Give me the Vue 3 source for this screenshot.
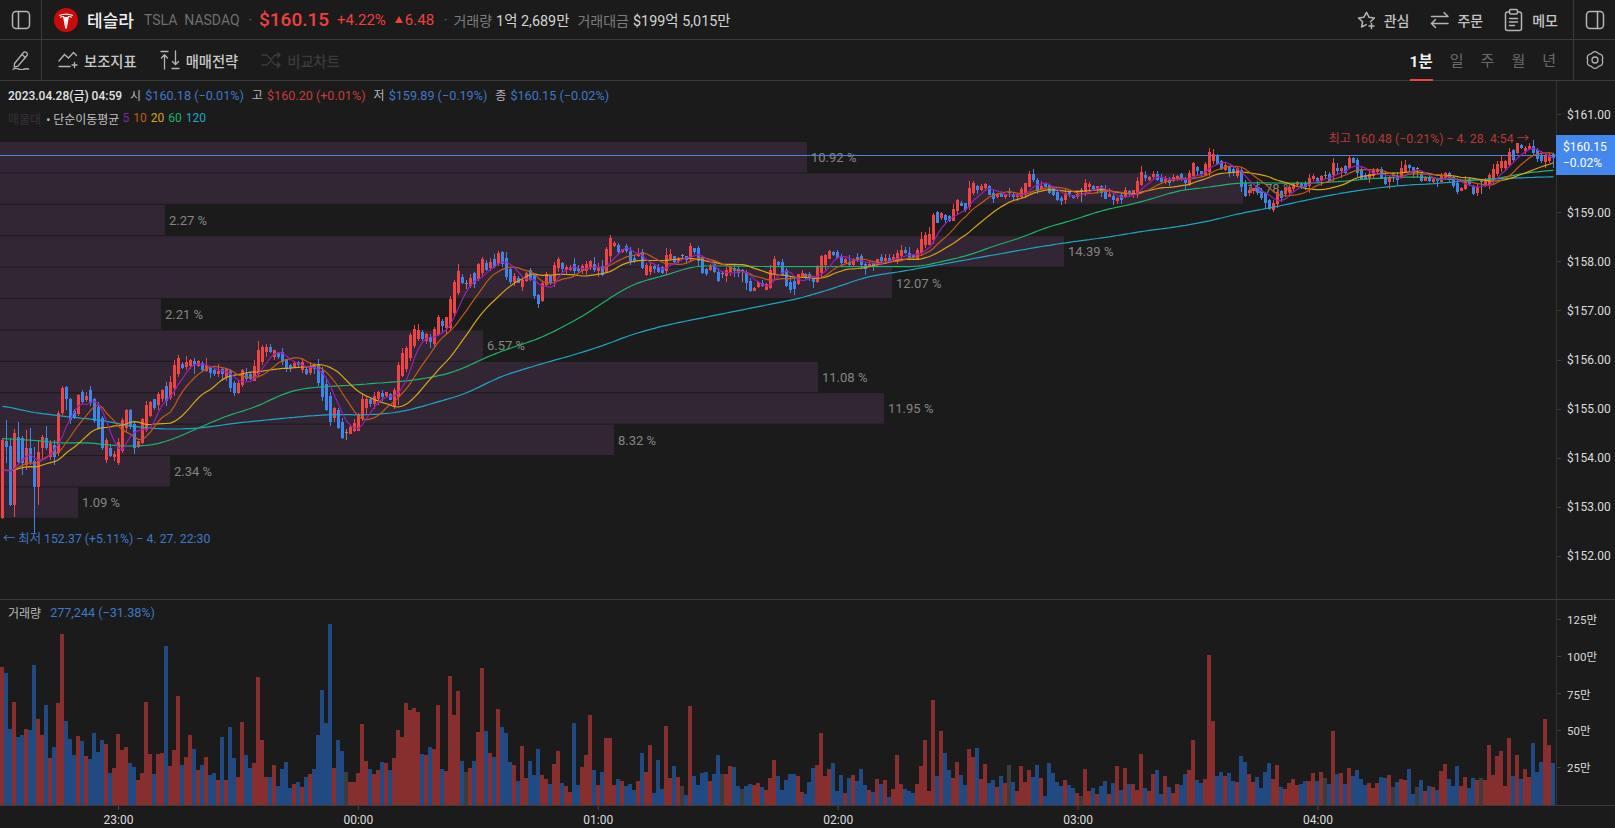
<template>
  <div class="page">
    <!-- Symbol bar -->
    <header class="bar top-bar">
      <div class="side-btn side-left">
        <svg width="20" height="20" viewBox="0 0 20 20" class="ico"><rect x="1.5" y="1.5" width="17" height="17" rx="3.5" /><path d="M7.5 1.5v17" /></svg>
      </div>
      <div class="logo">
        <svg width="24" height="24" viewBox="0 0 24 24">
          <circle cx="12" cy="12" r="12" fill="#c90b0b" />
          <path fill="#fff" d="M5 7Q12 4 19 7L18.6 8Q12 5.4 5.4 8Z" />
          <path fill="#fff" d="M6 8.7Q7.7 7.900 9.800 7.900L10.900 9.300 12 20.500 13.100 9.300 14.200 7.900Q16.300 7.900 18 8.700L17.300 10Q16.600 9 14.900 9L12.900 20 12 21 11.100 20 9.100 9Q7.400 9 6.700 10Z" />
          <path fill="#fff" d="M10.800 9h2.400L12.400 19.500h-.8Z" />
        </svg>
      </div>
      <strong class="name">테슬라</strong>
      <span class="ticker">TSLA</span>
      <span class="ticker exch">NASDAQ</span>
      <span class="dot">·</span>
      <span class="last">$160.15</span>
      <span class="chg">+4.22%</span>
      <span class="chg chg-abs"><i class="tri"></i>6.48</span>
      <span class="dot dot2">·</span>
      <span class="stat-label">거래량</span>
      <span class="stat-val">1억 2,689만</span>
      <span class="stat-label stat-gap">거래대금</span>
      <span class="stat-val">$199억 5,015만</span>
      <div class="spacer"></div>
      <button class="act">
        <svg width="20" height="20" viewBox="0 0 20 20" class="ico"><path d="M9.200 14.600 4.600 17l1-5.300L1.500 8l5.400-.8L9.500 2.300 12 7.200l5.400.8-3.900 3.700" stroke-linejoin="round" /><path d="M14.500 13.500v5M12 16h5" /></svg>
        <span>관심</span>
      </button>
      <button class="act">
        <svg width="20" height="18" viewBox="0 0 20 18" class="ico"><path d="M1.500 5.500h16.500M14 1.500l4 4M18 12.500H1.500M5.500 8.500l-4 4 4 4" /></svg>
        <span>주문</span>
      </button>
      <button class="act act-last">
        <svg width="19" height="24" viewBox="0 0 19 24" class="ico"><path d="M5.500 4H3.600Q1.500 4 1.500 6v14.500q0 2 2.100 2h11.800q2.100 0 2.100-2V6q0-2-2.100-2h-1.900" /><rect x="5.500" y="1.500" width="8" height="4.500" rx="1.200" /><path d="M5.500 10.500h8M5.500 14h8M5.500 17.500h5" /></svg>
        <span>메모</span>
      </button>
      <div class="side-btn side-right">
        <svg width="20" height="20" viewBox="0 0 20 20" class="ico"><rect x="1.500" y="1.500" width="17" height="17" rx="3.500" /><path d="M12.500 1.500v17" /></svg>
      </div>
    </header>

    <!-- Tool bar -->
    <nav class="bar tool-bar">
      <div class="side-btn side-left">
        <svg width="20" height="20" viewBox="0 0 20 20" class="ico thin"><path d="M3.500 13.500 12.500 2.500q1.200-1.200 2.600-.2l.9.8q1 1.100 0 2.400L7 16.200l-3.800 1z" stroke-linejoin="round" /><path d="M11 4.500l3.400 3" /><path d="M2 19.300q2.700-1.600 5.200-.4t5 .5q2.500-1 5.300-.4" /></svg>
      </div>
      <button class="tool tool-first">
        <svg width="20" height="18" viewBox="0 0 20 18" class="ico thin"><path d="M1 10 6.500 3.500 10.500 7 15.500 1.500l3 3" /><path d="M1 15.500h11" /><path d="M16.500 11.500v5M14 14h5" /></svg>
        <span>보조지표</span>
      </button>
      <button class="tool tool-mid">
        <svg width="20" height="20" viewBox="0 0 20 20" class="ico thin"><path d="M1 1.500h7M4.500 19V5M1.500 8l3-3.200 3 3.200" /><path d="M12 18.500h7M15.500 1v13.500M12.500 11.500l3 3 3-3" /></svg>
        <span>매매전략</span>
      </button>
      <button class="tool tool-mid tool-off">
        <svg width="20" height="16" viewBox="0 0 20 16" class="ico thin"><path d="M1 3h3.500q2 0 3.200 1.800l4.600 6.400Q13.500 13 15.500 13H19M1 13h3.500q2 0 3.200-1.800l4.600-6.400Q13.500 3 15.500 3H19M16.500 .5 19 3l-2.500 2.500M16.500 10.500 19 13l-2.500 2.500" /></svg>
        <span>비교차트</span>
      </button>
      <div class="spacer"></div>
      <div class="period-tabs">
        <span v-for="p in periods" :key="p" class="period" :class="{ active: p === '1분' }">{{ p }}</span>
      </div>
      <div class="side-btn side-right">
        <svg width="20" height="20" viewBox="0 0 20 20" class="ico thin"><path d="M6.350 3.680Q10 -.5 13.650 3.680 19.100 4.750 17.300 10 19.100 15.250 13.650 16.320 10 20.500 6.350 16.320 .9 15.250 2.700 10 .9 4.750 6.350 3.680Z" stroke-linejoin="round" /><circle cx="10" cy="10" r="3" /></svg>
      </div>
    </nav>

    <!-- Price pane -->
    <section class="pane price-pane">
      <div class="plot">
        <svg class="plot-svg" width="1556" height="518" viewBox="0 81 1556 518">
          <g v-for="(b, i) in bands" :key="'band' + i">
            <rect x="0" :y="bandTop(i)" :width="b.w" height="30.400" fill="#322635" />
            <text :x="b.w + 4" :y="bandTop(i) + 20" class="band-text">{{ b.label }}</text>
          </g>
          <rect x="0" y="155" width="1556" height="1" fill="#4a84dc" />
          <g shape-rendering="crispEdges">
            <g v-for="c in candles" :key="c.i">
              <rect :x="c.x + 1" :y="c.wt" width="1" :height="c.wb - c.wt" :fill="c.color" />
              <rect :x="c.x" :y="c.top" width="3" :height="c.flat ? 1 : c.h" :fill="c.color" />
            </g>
          </g>
          <polyline v-for="m in maLines" :key="m.color" :points="m.points" :stroke="m.color" fill="none" stroke-width="1.200" />
          <text x="1529" y="143" text-anchor="end" class="mark-text mark-high">최고 160.48 (−0.21%) − 4. 28. 4:54 →</text>
          <text x="3" y="543" class="mark-text mark-low">← 최저 152.37 (+5.11%) − 4. 27. 22:30</text>
        </svg>
        <div class="legend">
          <div class="legend-row">
            <b class="date">2023.04.28(금) 04:59</b>
            <span v-for="q in ohlc" :key="q.k" class="ohlc">
              <em>{{ q.k }}</em> <span :class="q.up ? 'red' : 'blue'">{{ q.v }}</span>
            </span>
          </div>
          <div class="legend-row row2">
            <span class="off">매물대</span>
            <span class="sma">• 단순이동평균</span>
            <span v-for="s in smaLegend" :key="s.n" :style="{ color: s.color }">{{ s.n }}</span>
          </div>
        </div>
      </div>
      <div class="axis">
        <div v-for="t in priceTicks" :key="t.label" class="tick" :style="{ top: t.y + 'px' }">
          <i></i><span>{{ t.label }}</span>
        </div>
        <div class="cur-price">$160.15<br />−0.02%</div>
      </div>
    </section>

    <!-- Volume pane -->
    <section class="pane vol-pane">
      <div class="plot">
        <svg class="plot-svg" width="1556" height="205" viewBox="0 600 1556 205" shape-rendering="crispEdges">
          <rect v-for="v in volBars" :key="v.i" :x="v.x" :y="805 - v.h" width="4" :height="v.h" :fill="v.color" />
        </svg>
        <div class="legend vol-legend">
          <em>거래량</em><span class="blue">277,244 (−31.38%)</span>
        </div>
      </div>
      <div class="axis">
        <div v-for="t in volTicks" :key="t.label" class="tick vol-tick" :style="{ top: t.y + 'px' }">
          <i></i><span>{{ t.label }}</span>
        </div>
      </div>
    </section>

    <!-- Time axis -->
    <svg class="time-axis" width="1615" height="22" viewBox="0 806 1615 22">
      <g v-for="t in timeTicks" :key="t.label">
        <rect :x="t.x" y="806" width="1" height="4" fill="#4a4a4a" />
        <text :x="t.x + 0.5" y="823.5" text-anchor="middle" class="time-text">{{ t.label }}</text>
      </g>
    </svg>
  </div>
</template>

<script setup>
const periods = ['1분', '일', '주', '월', '년']

const ohlc = [
  { k: '시', v: '$160.18 (−0.01%)', up: false },
  { k: '고', v: '$160.20 (+0.01%)', up: true },
  { k: '저', v: '$159.89 (−0.19%)', up: false },
  { k: '종', v: '$160.15 (−0.02%)', up: false }
]

const smaLegend = [
  { n: 5, color: '#7b2a9c' },
  { n: 10, color: '#c25a17' },
  { n: 20, color: '#d8a515' },
  { n: 60, color: '#1cb56a' },
  { n: 120, color: '#1ba6c6' }
]

// Volume profile rows, top to bottom
const bands = [
  { w: 807, label: '10.92 %' },
  { w: 1243, label: '16.78 %' },
  { w: 165, label: '2.27 %' },
  { w: 1064, label: '14.39 %' },
  { w: 892, label: '12.07 %' },
  { w: 161, label: '2.21 %' },
  { w: 483, label: '6.57 %' },
  { w: 818, label: '11.08 %' },
  { w: 884, label: '11.95 %' },
  { w: 614, label: '8.32 %' },
  { w: 170, label: '2.34 %' },
  { w: 78, label: '1.09 %' }
]
const bandTop = (i) => 142 + i * 31.4

const priceTicks = [161, 159, 158, 157, 156, 155, 154, 153, 152].map((p) => ({
  label: '$' + p.toFixed(2),
  y: 33.5 + (161 - p) * 49.1
}))
const volTicks = [
  { label: '125만', y: 19 },
  { label: '100만', y: 56 },
  { label: '75만', y: 93.5 },
  { label: '50만', y: 130 },
  { label: '25만', y: 167 }
]
const timeTicks = ['23:00', '00:00', '01:00', '02:00', '03:00', '04:00'].map((label, i) => ({
  label,
  x: 118 + i * 239.9
}))

// Volume per minute, R up / B down / G flat, height in px
const volRaw = `R138 B132 B76 R103 B68 B70 R76 B75 B140 R86 R70 B100 R47 B58 R102 R171 B84 B66 B50 R69 B64 R49 B46 B72 B53
B65 R61 B32 R37 R71 R55 R58 B42 B38 R25 R32 R103 R51 B31 R51 R52 B159 R39 R55 R109 B40 R48 R70 B56 R35
B40 R48 B30 B32 R25 B68 R25 B78 B47 R28 R83 B50 B37 R42 R128 R65 R28 B28 R40 B19 B36 B43 B17 R21 B23
R18 B28 R31 B36 B70 B115 B82 B181 R37 B65 B54 G33 R23 R23 R32 R81 R44 B36 R31 R35 B43 R42 B35 R47 R75
R68 R102 R95 R97 R93 B51 R50 B58 R56 R100 B36 R34 R129 R90 R114 B44 G33 R37 B44 R73 R137 B74 R52 B48 R96
B78 B72 B43 R40 B24 R59 R27 B44 B30 B56 R30 R26 B21 R41 R54 B22 R19 R13 B82 B20 R38 R50 R90 B35 R20
B33 R67 R67 R20 B26 R24 B19 B21 B15 R24 B52 R33 R60 B12 B45 B16 R79 R27 B39 R28 G19 B10 R99 B29 B20
B32 B33 R24 B31 B50 G31 R31 R39 B38 B19 G16 B19 B21 R20 R22 B18 R15 R27 R45 B29 B15 B25 B31 B31 R29
R13 B11 B23 B37 R40 R72 R29 R36 B42 B14 B30 R12 B27 R30 B24 B36 B20 R15 B13 R26 B21 R25 B8 R16 R50
R21 B16 B14 B12 R21 R39 R65 R14 R105 B29 R74 B52 B35 R27 R43 B30 B20 R56 R48 B57 R26 R41 B22 B25 R18
B29 R22 G40 B23 R14 R39 R23 R35 B28 B40 R27 B9 B42 B32 B23 B19 R25 B20 B17 R12 G9 R36 R14 B17 R11
B19 B24 R11 B22 R39 B15 R37 B21 R21 R15 R51 B17 R14 R31 B35 B11 R29 B18 R12 R21 B20 B31 R35 R65 B25
B22 R26 R150 R84 B29 B33 R29 B32 B24 R23 B49 B43 R31 R23 B28 B17 B33 B42 R26 R40 B18 R16 R22
R26 R20 B21 B24 R24 R32 B24 R33 G27 B21 R74 B31 R32 B21 R37 B29 B35 B26 B20 R22 R17 R22 B28 B27 R30
G18 B23 R26 R25 B36 B11 G18 B25 R14 B19 R18 B15 R34 R41 B26 B19 B39 R19 R28 B17 B27 R25 G27 R25 R60
R30 R49 R54 R19 R67 B29 R50 B26 R36 R28 B62 B33 B43 R86 R60 B42`

const vols = volRaw.trim().split(/\s+/).map((t) => ({ kind: t[0], h: +t.slice(1) }))

const volColor = { R: '#872f2f', B: '#214a82', G: '#3c3c3c' }
const candleColor = { R: '#ee4444', B: '#3f85e8', G: '#8a8a8a' }

const volBars = vols.map((v, i) => ({
  i,
  x: Math.round(i * 3.9975),
  h: v.h,
  color: volColor[v.kind]
}))

// Read off the reference crops: [x, y] in crop px (3x) from a crop origin
const strip = (ox, oy, pts) => pts.map(([x, y]) => [ox + x / 3, oy + y / 3])

const centerPts = [
  ...strip(0, 230, [[5,720],[30,730],[55,650],[80,670],[105,740],[115,690],[130,640],[150,650],[165,660],[178,600],[190,510],[200,490],[212,540],[225,555],[235,525],[248,500],[260,505],[272,500],[285,545],[300,570],[308,610],[320,660],[332,665],[345,680],[355,670],[368,615],[380,565],[392,565],[405,625],[415,645],[428,600],[440,560],[452,535],[465,520],[480,505],[490,490],[500,490],[512,480],[525,435],[537,405],[550,408],[565,400],[580,400],[595,400],[607,410],[620,415],[632,422],[645,425],[657,428],[668,425],[680,430],[692,450],[705,478],[715,475],[725,445],[740,438],[752,440],[763,430],[776,395],[787,372],[800,358],[812,360],[824,372],[836,375],[848,382],[860,405],[872,410],[885,405],[895,400],[908,408],[920,425],[932,420],[945,410],[955,430],[966,458],[978,495],[992,540],[1004,550],[1015,565],[1027,600],[1040,612],[1052,600],[1064,590],[1076,575],[1088,535],[1100,520],[1112,515],[1124,510],[1135,495],[1147,495],[1160,493],[1172,500],[1184,505],[1195,455],[1207,405],[1220,385],[1232,350],[1244,322],[1256,312],[1268,315],[1280,325],[1292,330],[1304,320],[1316,285],[1328,280],[1340,278],[1352,248],[1363,205],[1375,155],[1388,150],[1400,165],[1412,155],[1424,145],[1436,125],[1448,108],[1460,108],[1472,103],[1484,100],[1496,85],[1508,85]]),
  ...strip(400, 130, [[330,435],[345,450],[358,450],[368,460],[380,440],[392,435],[405,470],[415,510],[428,485],[440,448],[452,450],[463,430],[475,400],[487,408],[500,417],[512,415],[524,412],[536,420],[548,415],[560,412],[572,403],[584,412],[596,415],[608,420],[620,390],[632,350],[644,342],[656,355],[668,362],[680,355],[692,378],[704,388],[716,372],[728,390],[740,420],[752,418],[764,412],[776,418],[788,420],[800,400],[812,378],[824,388],[836,390],[848,380],[860,385],[872,368],[884,360],[896,375],[908,405],[920,425],[932,415],[944,415],[956,440],[968,435],[980,430],[992,420],[1004,420],[1016,423],[1028,430],[1040,445],[1052,468],[1064,478],[1076,462],[1088,465],[1100,470],[1112,445],[1124,408],[1136,400],[1148,415],[1160,445],[1172,470],[1180,470],[1192,452],[1204,435],[1216,436],[1228,440],[1240,450],[1252,435],[1264,405],[1276,390],[1288,375],[1300,370],[1312,375],[1324,388],[1336,392],[1348,400],[1360,398],[1372,385],[1384,390],[1396,410],[1408,405],[1420,405],[1432,398],[1444,388],[1456,388],[1468,388],[1480,385],[1492,382],[1504,370],[1516,365],[1528,375],[1540,380]]),
  ...strip(900, 130, [[52,375],[64,350],[76,330],[88,330],[100,295],[112,262],[124,258],[136,262],[148,265],[160,255],[172,228],[184,222],[196,232],[208,202],[220,175],[232,175],[244,175],[256,168],[268,180],[280,197],[292,195],[304,195],[316,198],[328,190],[340,197],[352,197],[364,190],[376,180],[388,150],[400,140],[412,165],[424,172],[436,165],[448,175],[460,183],[472,197],[484,208],[496,200],[508,188],[520,200],[532,197],[544,192],[556,175],[568,165],[580,172],[592,172],[604,178],[616,195],[628,197],[640,203],[652,208],[664,205],[676,192],[688,188],[700,190],[712,175],[724,145],[736,138],[748,145],[760,138],[772,140],[784,150],[796,152],[808,155],[820,148],[832,142],[844,140],[856,155],[868,150],[880,118],[892,112]]),
  ...strip(1040, 130, [[472,118],[484,128],[496,118],[508,95],[520,82],[532,90],[544,105],[556,112],[568,118],[580,122],[592,125],[604,145],[616,178],[628,185],[640,180],[652,178],[664,192],[676,205],[688,222],[700,230],[712,205],[724,195],[736,183],[748,178],[760,170],[772,160],[784,165],[796,165],[808,155],[820,142],[832,150],[844,145],[856,140],[868,145],[880,118],[892,118],[904,120],[916,118],[928,100],[940,90],[952,110],[964,130],[976,140],[988,140],[1000,130],[1012,122],[1024,130],[1036,152],[1048,150],[1060,140],[1072,145],[1084,130],[1096,115],[1108,110],[1120,118],[1132,125],[1144,142],[1156,147],[1168,147],[1180,150],[1192,150],[1204,148],[1216,135],[1228,140],[1240,155],[1252,170],[1264,178],[1276,165],[1288,155],[1300,180],[1312,180],[1324,165],[1336,155],[1348,150],[1360,132],[1372,118],[1384,105],[1396,105],[1408,85],[1420,75],[1432,55],[1444,50],[1456,60],[1468,52],[1480,58],[1492,75],[1504,85],[1516,88],[1528,85],[1540,90]])
]

const ma60Pts = [
  ...strip(0, 230, [[0,625],[130,633],[180,640],[260,637],[350,648],[440,648],[500,635],[560,610],[620,583],[700,550],[760,535],[820,505],[880,480],[960,470],[1040,467],[1120,460],[1200,455],[1280,445],[1340,432]]),
  ...strip(400, 130, [[180,720],[240,690],[300,665],[420,625],[500,585],[570,545],[620,510],[660,485],[710,458],[800,435],[880,408],[1000,408],[1100,410],[1560,410]]),
  ...strip(900, 130, [[100,400],[200,378],[290,345],[360,325],[430,295],[520,270],[610,240],[700,222],[760,205],[840,180]]),
  ...strip(1040, 130, [[480,175],[600,158],[800,160],[900,155],[1000,145],[1140,140],[1250,150],[1350,150],[1450,130],[1540,120]])
]

const ma120Pts = [
  ...strip(0, 230, [[0,525],[100,548],[200,560],[300,570],[400,590],[500,598],[600,595],[700,580],[800,570],[900,560],[1000,553],[1100,555],[1200,547],[1300,520],[1400,490],[1500,440]]),
  ...strip(400, 130, [[370,718],[430,700],[520,675],[600,650],[700,612],[800,585],[900,565],[1000,545],[1100,525],[1200,505],[1300,475],[1400,440],[1500,425]]),
  ...strip(1040, 130, [[0,350],[100,335],[200,322],[300,305],[400,292],[500,275],[600,250],[700,232],[800,210],[900,190],[1000,175],[1100,165],[1200,160],[1300,150],[1400,145],[1540,140]])
]

function interp(pts, x) {
  if (x <= pts[0][0]) return pts[0][1]
  for (let i = 1; i < pts.length; i++) {
    if (x <= pts[i][0]) {
      const [x0, y0] = pts[i - 1]
      const [x1, y1] = pts[i]
      return y0 + ((y1 - y0) * (x - x0)) / (x1 - x0)
    }
  }
  return pts[pts.length - 1][1]
}

// Fixed seed so the wicks come out the same each run
let seed = 41
function rnd() {
  seed = (seed * 16807) % 2147483647
  return seed / 2147483647
}

const barX = (i) => Math.round(i * 3.9975) + 1
const centers = vols.map((_, i) => interp(centerPts, barX(i) + 1.5))

// Left-most candles are large enough to set by hand: top, bottom, wick top, wick bottom
const manual = {
  0: [440, 518, 438, 519],
  1: [441, 447, 420, 463],
  2: [446, 505, 438, 506],
  3: [433, 505, 429, 517],
  4: [437, 462, 422, 465],
  5: [438, 463, 436, 475],
  6: [448, 465, 430, 470],
  7: [448, 462, 428, 465],
  8: [461, 487, 447, 533],
  9: [452, 487, 440, 505],
  10: [437, 448, 435, 460],
  11: [438, 448, 426, 450],
  12: [443, 457, 440, 460],
  13: [445, 457, 440, 465],
  14: [413, 453, 411, 456],
  15: [388, 413, 386, 415],
  16: [387, 399, 386, 410],
  383: [146, 153, 140, 155],
  388: [154, 158, 153, 168]
}

const candles = vols.map((v, i) => {
  const c = centers[i]
  const prev = centers[Math.max(0, i - 1)]
  const next = centers[Math.min(vols.length - 1, i + 1)]
  let h = Math.min(38, Math.max(3, Math.abs(next - prev) * 0.8 + v.h * 0.07))
  let top = c - h / 2
  let wt = top - (rnd() * rnd() * 8 + v.h * 0.015)
  let wb = top + h + (rnd() * rnd() * 8 + v.h * 0.015)
  if (manual[i]) {
    const [t, b, wT, wB] = manual[i]
    top = t
    h = b - t
    wt = wT
    wb = wB
  }
  return {
    i,
    x: barX(i),
    top: Math.round(top),
    h: Math.max(1, Math.round(h)),
    wt: Math.round(wt),
    wb: Math.round(wb),
    flat: v.kind === 'G',
    color: candleColor[v.kind]
  }
})

function movingAvg(ys, n) {
  return ys.map((_, i) => {
    let sum = 0
    for (let k = 0; k < n; k++) sum += ys[Math.max(0, i - k)]
    return sum / n
  })
}
// Centered window, evens out the hand-read control points
function smooth(ys, n) {
  return ys.map((_, i) => {
    let sum = 0
    for (let k = -n; k <= n; k++) sum += ys[Math.min(ys.length - 1, Math.max(0, i + k))]
    return sum / (2 * n + 1)
  })
}
const toLine = (ys) => ys.map((y, i) => `${barX(i) + 1.5},${y.toFixed(1)}`).join(' ')
const sampled = (pts) => vols.map((_, i) => interp(pts, barX(i) + 1.5))

const maLines = [
  { color: '#1ba6c6', points: toLine(smooth(sampled(ma120Pts), 3)) },
  { color: '#1cb56a', points: toLine(smooth(sampled(ma60Pts), 3)) },
  { color: '#d8a515', points: toLine(movingAvg(centers, 20)) },
  { color: '#c25a17', points: toLine(movingAvg(centers, 10)) },
  { color: '#9a1fb4', points: toLine(movingAvg(centers, 5)) }
]
</script>

<style scoped>
.page {
  width: 1615px;
  height: 828px;
  overflow: hidden;
  background: #1b1b1b;
  color: #d8d8d8;
  font-family: Roboto, "Noto Sans CJK KR", sans-serif;
  display: flex;
  flex-direction: column;
}

.bar {
  display: flex;
  align-items: center;
  flex: none;
  border-bottom: 1px solid #3a3a3a;
  box-sizing: border-box;
}
.top-bar {
  height: 40px;
}
.tool-bar {
  height: 41px;
}
.spacer {
  flex: 1;
}

.side-btn {
  height: 100%;
  display: flex;
  align-items: center;
  justify-content: center;
  flex: none;
  box-sizing: border-box;
}
.side-left {
  width: 42px;
  border-right: 1px solid #3a3a3a;
}
.side-right {
  width: 42px;
  border-left: 1px solid #3a3a3a;
}

.ico {
  fill: none;
  stroke: #b4b4b4;
  stroke-width: 1.5;
  stroke-linecap: round;
}
.ico.thin {
  stroke-width: 1.3;
}

.logo {
  margin-left: 12px;
  width: 24px;
  height: 24px;
  flex: none;
}
.name {
  margin-left: 9px;
  font-size: 17px;
  font-weight: 500;
  color: #f0f0f0;
}
.ticker {
  margin-left: 10px;
  font-size: 14px;
  color: #6f6f6f;
}
.exch {
  margin-left: 7px;
}
.dot {
  margin-left: 9px;
  color: #6f6f6f;
  font-size: 13px;
}
.last {
  margin-left: 7px;
  font-size: 19px;
  font-weight: 500;
  color: #ee4040;
}
.chg {
  margin-left: 8px;
  font-size: 15px;
  color: #ee4040;
}
.chg-abs {
  display: flex;
  align-items: center;
  margin-left: 9px;
}
.tri {
  width: 0;
  height: 0;
  margin-right: 2px;
  border-left: 4px solid transparent;
  border-right: 4px solid transparent;
  border-bottom: 7px solid #ee4040;
}
.dot2 {
  margin-left: 10px;
}
.stat-label {
  margin-left: 6px;
  font-size: 14px;
  color: #7c7c7c;
}
.stat-gap {
  margin-left: 8px;
}
.stat-val {
  margin-left: 4px;
  font-size: 14.4px;
  color: #d4d4d4;
}

.act {
  display: flex;
  align-items: center;
  gap: 7px;
  margin-left: 21px;
  padding: 0;
  background: none;
  border: none;
  color: #c4c4c4;
  font: inherit;
  font-size: 14px;
  font-weight: 500;
}
.act-last {
  gap: 9px;
  margin-right: 15px;
}

.tool {
  display: flex;
  align-items: center;
  gap: 6px;
  padding: 0;
  background: none;
  border: none;
  color: #c8c8c8;
  font: inherit;
  font-size: 14.3px;
  font-weight: 500;
}
.tool-first {
  margin-left: 16px;
}
.tool-mid {
  margin-left: 23px;
}
.tool-off {
  color: #3c3c3c;
}
.tool-off .ico {
  stroke: #3c3c3c;
}

.period-tabs {
  display: flex;
  height: 100%;
  margin-right: 17px;
  gap: 17px;
}
.period {
  display: flex;
  align-items: center;
  font-size: 15px;
  color: #6a6a6a;
  box-sizing: border-box;
  border-bottom: 2px solid transparent;
  margin-bottom: -1px;
}
.period.active {
  color: #f0f0f0;
  font-size: 15.5px;
  font-weight: 700;
  border-bottom-color: #e84545;
}

.pane {
  display: flex;
  flex: none;
  box-sizing: border-box;
}
.price-pane {
  height: 519px;
  border-bottom: 1px solid #3a3a3a;
}
.vol-pane {
  height: 206px;
  border-bottom: 1px solid #3a3a3a;
}
.plot {
  position: relative;
  width: 1556px;
  flex: none;
}
.plot-svg {
  display: block;
}
.axis {
  position: relative;
  flex: 1;
  border-left: 1px solid #333;
}
.tick {
  position: absolute;
  left: 0;
  display: flex;
  align-items: center;
  height: 16px;
  margin-top: -8px;
  font-size: 12px;
  color: #dcdcdc;
  white-space: nowrap;
}
.vol-tick {
  font-size: 11.5px;
}
.tick i {
  width: 4px;
  height: 1px;
  margin-right: 6px;
  background: #3a3a3a;
}
.cur-price {
  position: absolute;
  left: -1px;
  right: 0;
  top: 54px;
  height: 40px;
  box-sizing: border-box;
  padding: 4px 0 0 7px;
  background: #4488ee;
  color: #fff;
  font-size: 12px;
  line-height: 16px;
}

.legend {
  position: absolute;
  left: 8px;
  top: 4px;
  font-size: 12.6px;
}
.legend-row {
  display: flex;
  align-items: center;
  gap: 8px;
  height: 18px;
  white-space: nowrap;
}
.row2 {
  margin-top: 6px;
  gap: 4px;
  font-size: 12px;
}
.date {
  font-size: 12px;
  font-weight: 500;
  color: #e4e4e4;
}
.ohlc em,
.vol-legend em {
  font-style: normal;
  font-size: 12px;
  color: #b8b8b8;
}
.ohlc em {
  margin-right: 1px;
}
.red {
  color: #c63b3b;
}
.blue {
  color: #3f77c8;
}
.off {
  color: #3a2f3a;
}
.sma {
  color: #c0c0c0;
  margin: 0 -1px 0 1px;
}
.vol-legend {
  top: 4px;
  display: flex;
  align-items: center;
  gap: 9px;
}

.time-axis {
  display: block;
  flex: none;
}

.band-text {
  font-size: 13px;
  fill: #858585;
}
.mark-text {
  font-size: 12.3px;
}
.mark-high {
  fill: #b53a3a;
}
.mark-low {
  fill: #3f77c8;
}
.time-text {
  font-size: 12px;
  fill: #dcdcdc;
}
</style>

<style>
body {
  background: #1b1b1b;
}
</style>
